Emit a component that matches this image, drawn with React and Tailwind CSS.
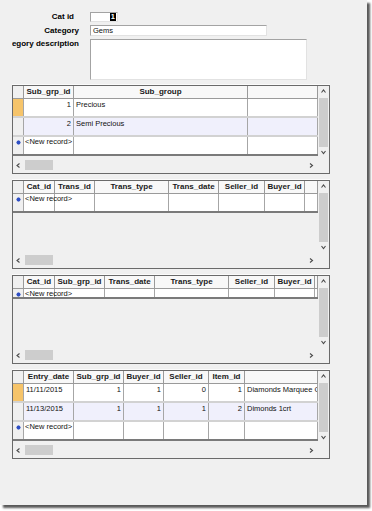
import React from 'react';

const FONT = { fontFamily: '"Liberation Sans", Arial, sans-serif' };

const Chevron = ({ dir }) => {
    const pts = {
        up: '0.5,3.5 2.5,1 4.5,3.5',
        down: '0.5,1 2.5,3.5 4.5,1',
        left: '3.5,0.5 1,2.5 3.5,4.5',
        right: '1,0.5 3.5,2.5 1,4.5',
    }[dir];
    return (
        <svg width="5" height="5" viewBox="0 0 5 5" className="block">
            <polyline points={pts} fill="none" stroke="#4a4a4a" strokeWidth="1.1" />
        </svg>
    );
};

const Star = () => (
    <svg width="5" height="5" viewBox="0 0 6 6" className="block">
        <g stroke="#2f4fc4" strokeWidth="1.3">
            <line x1="3" y1="0.5" x2="3" y2="5.5" />
            <line x1="0.5" y1="3" x2="5.5" y2="3" />
            <line x1="1.2" y1="1.2" x2="4.8" y2="4.8" />
            <line x1="4.8" y1="1.2" x2="1.2" y2="4.8" />
        </g>
    </svg>
);

const VScroll = () => (
    <div className="flex w-[11px] shrink-0 flex-col items-center bg-[#f0f0f0]">
        <div className="flex h-[12px] items-center justify-center"><Chevron dir="up" /></div>
        <div className="h-[50px] w-[9px] bg-[#cdcdcd]" />
        <div className="flex-1" />
        <div className="flex h-[10px] items-center justify-center"><Chevron dir="down" /></div>
    </div>
);

const HScroll = () => (
    <div className="flex h-[16px] items-center bg-[#f0f0f0]">
        <div className="flex w-[11px] justify-center"><Chevron dir="left" /></div>
        <div className="ml-[1px] h-[10px] w-[28px] bg-[#cdcdcd]" />
        <div className="flex-1" />
        <div className="flex w-[13px] justify-center"><Chevron dir="right" /></div>
        <div className="w-[11px]" />
    </div>
);

const Subform = ({ cols, rows = [], newRowH = 19 }) => (
    <div className="flex h-[89px] w-[318px] flex-col border border-[#6a6a6a] bg-[#f0f0f0] shadow-[0_-1px_0_#fbfbfb]">
        <div className="flex h-[71px]">
            <div className="flex w-[305px] flex-col overflow-hidden">
                {/* header */}
                <div className="flex h-[13px] shrink-0 border-b border-[#9a9a9a] bg-[#f8f8f8]">
                    <div className="w-[11px] shrink-0 border-r border-[#9a9a9a] bg-[#f0f0f0]" />
                    {cols.map((c, i) => (
                        <div key={i} style={{ width: c.w }}
                            className="shrink-0 overflow-hidden whitespace-nowrap border-r border-[#9a9a9a] text-center text-[8px] font-bold leading-[12px] text-[#1a1a1a]">
                            {c.label}
                        </div>
                    ))}
                </div>
                {/* records */}
                {rows.map((r, ri) => (
                    <div key={ri} className={`flex h-[19px] shrink-0 border-b-2 border-[#d2d2d2] ${ri % 2 ? 'bg-[#f0f0fc]' : 'bg-white'}`}>
                        <div className={`w-[11px] shrink-0 border-r border-[#a6a6a6] ${ri === 0 ? 'bg-[#f6c46a]' : 'bg-[#f0f0f0]'}`} />
                        {cols.map((c, i) => (
                            <div key={i} style={{ width: c.w }}
                                className={`shrink-0 overflow-hidden whitespace-nowrap border-r border-[#a6a6a6] px-[2px] pt-[1px] text-[7.5px] leading-[9px] text-[#111] ${c.right ? 'text-right' : 'text-left'}`}>
                                {r[i]}
                            </div>
                        ))}
                    </div>
                ))}
                {/* new record */}
                <div style={{ height: newRowH }} className="flex shrink-0 border-b-2 border-[#7a7a7a] bg-white">
                    <div className="flex w-[11px] shrink-0 justify-center border-r border-[#a6a6a6] bg-[#f0f0f0] pt-[3px]">
                        <Star />
                    </div>
                    {cols.map((c, i) => (
                        <div key={i} style={{ width: c.w }}
                            className={`relative shrink-0 whitespace-nowrap border-r border-[#a6a6a6] px-[1px] text-[7.5px] leading-[9px] text-[#111] ${i === 0 ? 'z-10 overflow-visible' : 'overflow-hidden'}`}>
                            {i === 0 ? '<New record>' : ''}
                        </div>
                    ))}
                </div>
            </div>
            <VScroll />
        </div>
        <HScroll />
    </div>
);

const SUB_GROUP_COLS = [
    { label: 'Sub_grp_id', w: 50, right: true },
    { label: 'Sub_group', w: 174 },
    { label: '', w: 70 },
];

const TRANS_COLS = [
    { label: 'Cat_id', w: 31 },
    { label: 'Trans_id', w: 40 },
    { label: 'Trans_type', w: 74 },
    { label: 'Trans_date', w: 50 },
    { label: 'Seller_id', w: 46 },
    { label: 'Buyer_id', w: 40 },
    { label: '', w: 13 },
];

const TRANS2_COLS = [
    { label: 'Cat_id', w: 31 },
    { label: 'Sub_grp_id', w: 50 },
    { label: 'Trans_date', w: 50 },
    { label: 'Trans_type', w: 74 },
    { label: 'Seller_id', w: 46 },
    { label: 'Buyer_id', w: 40 },
    { label: '', w: 3 },
];

const ENTRY_COLS = [
    { label: 'Entry_date', w: 50 },
    { label: 'Sub_grp_id', w: 50, right: true },
    { label: 'Buyer_id', w: 40, right: true },
    { label: 'Seller_id', w: 45, right: true },
    { label: 'Item_id', w: 36, right: true },
    { label: '', w: 73 },
];

const App = () => (
    <div className="h-[511px] w-[372px] bg-white" style={FONT}>
        <div className="flex h-[505px] w-[367px] flex-col bg-[#f0f0f0] pl-[12px] pt-[12px] shadow-[3px_3px_2px_rgba(0,0,0,0.65)]">
            {/* Main form fields */}
            <div className="flex h-[10px] items-center">
                <div className="flex w-[67px] justify-end pr-[5px] text-[8px] font-bold leading-[10px] text-black">Cat id</div>
                <div className="ml-[11px] flex h-[10px] w-[28px] items-center justify-end border border-[#a3a3a3] border-b-[#e2e2e2] border-r-[#e2e2e2] bg-white pr-[1px]">
                    <span className="bg-black px-[1px] text-[7.5px] font-bold leading-[8px] text-white">1</span>
                </div>
            </div>
            <div className="mt-[3px] flex h-[11px] items-center">
                <div className="flex w-[67px] justify-end text-[8px] font-bold leading-[10px] text-black">Category</div>
                <div className="ml-[11px] flex h-[11px] w-[177px] items-center border border-[#a3a3a3] border-b-[#e2e2e2] border-r-[#e2e2e2] bg-white pl-[2px] text-[7.5px] leading-[9px] text-[#111]">
                    Gems
                </div>
            </div>
            <div className="mt-[3px] flex h-[41px] items-start">
                <div className="flex w-[67px] justify-end overflow-hidden whitespace-nowrap pt-[-1px] text-[8px] font-bold leading-[9px] text-black">
                    <span className="shrink-0">Category description</span>
                </div>
                <div className="ml-[11px] h-[41px] w-[217px] border border-[#a3a3a3] border-b-[#e2e2e2] border-r-[#e2e2e2] bg-white" />
            </div>

            {/* Subforms */}
            <div className="mt-[5px] flex flex-col gap-[6px]">
                <Subform cols={SUB_GROUP_COLS} rows={[['1', 'Precious', ''], ['2', 'Semi Precious', '']]} />
                <Subform cols={TRANS_COLS} />
                <Subform cols={TRANS2_COLS} newRowH={10} />
                <Subform cols={ENTRY_COLS} rows={[
                    ['11/11/2015', '1', '1', '0', '1', 'Diamonds Marquee Cut'],
                    ['11/13/2015', '1', '1', '1', '2', 'Dimonds 1crt'],
                ]} />
            </div>
        </div>
    </div>
);

export default App;
